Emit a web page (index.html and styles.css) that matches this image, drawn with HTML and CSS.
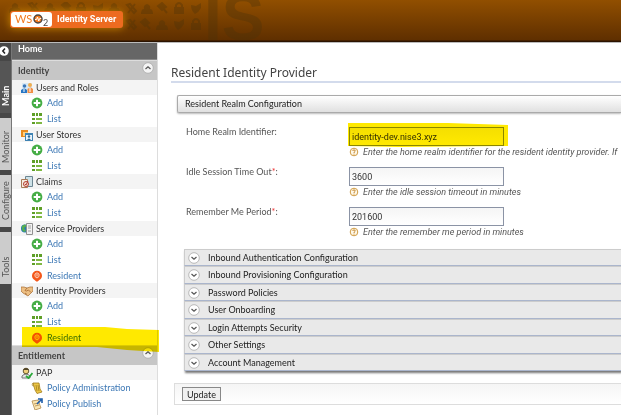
FILE: index.html
```html
<!DOCTYPE html>
<html lang="en">
<head>
<meta charset="utf-8">
<title>WSO2 Identity Server</title>
<link rel="stylesheet" href="styles.css">
</head>
<body>
<svg class="defs" aria-hidden="true">
  <symbol id="add" viewBox="0 0 12 12"><circle cx="6" cy="6" r="5.400" fill="#45ad45"/><path d="M6 2.700v6.600M2.700 6h6.600" stroke="#fff" stroke-width="2"/></symbol>
  <symbol id="list" viewBox="0 0 12 12"><path d="M1 0h3v3H1zM5 0h2v3H5zM8 0h3v3H8zM1 5h3v2H1zM1 9h3v2H1z" fill="#5f9f28"/><path d="M5 5h6v2H5zM5 9h6v2H5z" fill="#7fb843"/></symbol>
  <symbol id="resident" viewBox="0 0 12 12"><path d="M6 .7a5 5 0 0 1 5 5C11 8.600 8.500 9.800 6 11.800 3.500 9.800 1 8.600 1 5.700a5 5 0 0 1 5-5z" fill="#f4581b"/><path d="M6 2.800 8 4v2.500L6 8 4 6.500V4z" fill="none" stroke="#ffd3bd"/><path d="M6 4v2.500" stroke="#ffd3bd"/></symbol>
  <symbol id="users" viewBox="0 0 12 12"><path d="M1 1h10v9H1z" fill="#d7e8f5"/><circle cx="3.500" cy="4" r="1.800" fill="#3a76b8"/><circle cx="9" cy="3" r="2" fill="#f0ad4c"/><path d="M0 11V8q3.500-3 6 0v3z" fill="#2876c4"/><path d="M6.500 11V7q3-3 5.500 0v4z" fill="#f08e45"/><path d="M3 7v3M9 6v4" stroke="#fff"/></symbol>
  <symbol id="stores" viewBox="0 0 12 12"><path d="M0 1h7v7H0z" fill="#e88a1c"/><path d="M2 3h5v4H2z" fill="#ffd080"/><path d="M4 4h8v8H4z" fill="#3f83b3"/><path d="M5 6h6v5H5z" fill="#e7f2fa"/><circle cx="8" cy="7.500" r="1.200" fill="#326c98"/><path d="M6 11q2-3 4 0z" fill="#326c98"/></symbol>
  <symbol id="claims" viewBox="0 0 12 12"><path d="M4.500.5h7v10h-7z" fill="#cde1e7" stroke="#6c8692"/><path d="M.5 3.500h6v8h-6z" fill="#f7eee1" stroke="#a77b57"/><circle cx="5" cy="8" r="2.500" fill="#f5ded0" stroke="#b33d31"/><path d="m4 8 1 1 2-4" fill="none" stroke="#b33d31"/></symbol>
  <symbol id="service" viewBox="0 0 12 12"><circle cx="4" cy="5.500" r="4" fill="#2277b7"/><path d="M1 3q3-3 5 0L3 5l2 3-2 1Q0 7 1 3z" fill="#56ad50"/><path d="M5.500.5h6v11h-6z" fill="#f2f2f2" stroke="#909090"/><path d="M7 3h3M7 5h3M7 8h3" stroke="#a0a0a0"/></symbol>
  <symbol id="shake" viewBox="0 0 12 12"><path d="M0 2h3l3 1 3-1h3v4L7 11 2 8 0 6z" fill="#edbf83" stroke="#a66c31" stroke-width=".7"/><path d="M6 3 4 5.500l1.500.5L7.500 5 10 7.500M4 8l2 1.500" fill="none" stroke="#a3662e" stroke-width=".8"/></symbol>
  <symbol id="pap" viewBox="0 0 12 12"><path d="M1 11V9q4-4 8 0v2z" fill="#e5e5e5" stroke="#777"/><circle cx="5" cy="4" r="2.800" fill="#f0cf79" stroke="#665630"/><path d="M2 3q3-4 6 0z" fill="#514528"/><path d="m5 9 2.500 2L11.500 6" fill="none" stroke="#28a938" stroke-width="1.800"/></symbol>
  <symbol id="policy" viewBox="0 0 12 12"><path d="M2 1h6l1 6 2 3-5 1.500L4 8z" fill="#ecc747" stroke="#a37c19" stroke-width=".8"/><path d="M2 1q-2 3 1 3M5 3l1 6M7 3l1 6" fill="none" stroke="#a37c19" stroke-width=".8"/></symbol>
  <symbol id="publish" viewBox="0 0 12 12"><path d="m1 3 6-1 3 8-6 2z" fill="#fae5b2" stroke="#b38a4b" stroke-width=".8"/><path d="m3 6 4-1M4 8l4-1" stroke="#b38a4b" stroke-width=".8"/><path d="m6 6 4-4M7 1h4v4" fill="none" stroke="#1d5ca9" stroke-width="1.600"/></symbol>
  <symbol id="down" viewBox="0 0 12 12"><circle cx="6" cy="6" r="5.300" fill="#fff" stroke="#aaa" stroke-width=".8"/><path d="m3.500 5 2.500 2.300L8.500 5" fill="none" stroke="#555" stroke-width="1.200"/></symbol>
  <symbol id="up" viewBox="0 0 12 12"><circle cx="6" cy="6" r="5.300" fill="#f4f4f4" stroke="#aaa" stroke-width=".8"/><path d="M3.500 7 6 4.700 8.500 7" fill="none" stroke="#555" stroke-width="1.200"/></symbol>
  <symbol id="help" viewBox="0 0 10 10"><circle cx="5" cy="5" r="3.800" fill="#fff8e7" stroke="#cf9b43"/><path d="M3.700 4Q4 2.800 5 2.900q1.500.2 1.200 1.300Q5 4.800 5 6M5 6.600v1" fill="none" stroke="#c4862d"/></symbol>
</svg>
<header class="header">
  <svg class="pattern" viewBox="0 0 210 30" aria-hidden="true">
    <defs>
      <g id="tools"><path d="m1 2 3-1 6 7-2 2zM9 1 2 10" stroke="#4b3209" stroke-width="2" fill="none"/></g>
      <g id="people"><path d="M0 11q0-5 3-5-1-4 3-5 4 1 3 5 3 0 3 5z" fill="#4b3209"/></g>
      <g id="gavel"><path d="m2 3 4-3 4 4-4 3zM6 4l5 6" fill="#4b3209" stroke="#4b3209" stroke-width="2"/></g>
      <g id="lock"><path d="M1 5h10v7H1z" fill="#4b3209"/><path d="M3 6V3q3-4 6 0v3" fill="none" stroke="#4b3209" stroke-width="2"/></g>
      <g id="shield"><path d="m1 3 5 1 5-3v5q-2 4-6 6Q1 9 1 3z" fill="#4b3209"/></g>
    </defs>
    <use href="#people" x="9" y="0"/><use href="#tools" x="28" y="0"/><use href="#people" x="44" y="0"/><use href="#gavel" x="60" y="0"/><use href="#lock" x="75" y="0"/><use href="#shield" x="92" y="0"/><use href="#people" x="108" y="0"/>
    <use href="#tools" x="126" y="1"/><use href="#people" x="141" y="1"/><use href="#gavel" x="156" y="1"/><use href="#lock" x="173" y="0"/><use href="#shield" x="190" y="0"/>
    <use href="#tools" x="126" y="17"/><use href="#gavel" x="139" y="17"/><use href="#people" x="156" y="17"/><use href="#shield" x="173" y="16"/><use href="#lock" x="190" y="16"/>
  </svg>
  <span class="watermark" aria-hidden="true">IS</span>
  <a class="brand" href="#">
    <svg class="logo" viewBox="0 0 41 15" role="img" aria-label="WSO2">
      <text x="4" y="11" class="logo-text">WS</text>
      <circle cx="27" cy="7" r="4" fill="#f47b20" stroke="#4b4540" stroke-width="1.500"/>
      <path d="M24 7.500h1.500l1-2.500 1.200 4 1-2.500h1.500" fill="none" stroke="#fff"/>
      <text x="32" y="14" class="logo-two">2</text>
    </svg>
    <span>Identity Server</span>
  </a>
</header>
<div class="layout">
  <nav class="tabs" aria-label="Sections">
    <button class="collapse" aria-label="Collapse menu"><svg viewBox="0 0 10 10"><circle cx="4" cy="5" r="4.800" fill="#fff"/><path d="M5 2.500 2.800 5 5 7.500" fill="none" stroke="#222" stroke-width="1.500"/></svg></button>
    <a class="tab active" href="#">Main</a>
    <a class="tab" href="#">Monitor</a>
    <a class="tab" href="#">Configure</a>
    <a class="tab" href="#">Tools</a>
  </nav>
  <nav class="menu" aria-label="Main menu">
    <a class="home" href="#">Home</a>
    <h2>Identity <button aria-label="Collapse Identity"><svg><use href="#up"/></svg></button></h2>
    <h3><svg><use href="#users"/></svg>Users and Roles</h3>
    <ul><li><a href="#"><svg><use href="#add"/></svg>Add</a></li><li><a href="#"><svg><use href="#list"/></svg>List</a></li></ul>
    <h3><svg><use href="#stores"/></svg>User Stores</h3>
    <ul><li><a href="#"><svg><use href="#add"/></svg>Add</a></li><li><a href="#"><svg><use href="#list"/></svg>List</a></li></ul>
    <h3><svg><use href="#claims"/></svg>Claims</h3>
    <ul><li><a href="#"><svg><use href="#add"/></svg>Add</a></li><li><a href="#"><svg><use href="#list"/></svg>List</a></li></ul>
    <h3><svg><use href="#service"/></svg>Service Providers</h3>
    <ul><li><a href="#"><svg><use href="#add"/></svg>Add</a></li><li><a href="#"><svg><use href="#list"/></svg>List</a></li><li><a href="#"><svg><use href="#resident"/></svg>Resident</a></li></ul>
    <h3><svg><use href="#shake"/></svg>Identity Providers</h3>
    <ul><li><a href="#"><svg><use href="#add"/></svg>Add</a></li><li><a href="#"><svg><use href="#list"/></svg>List</a></li><li class="marked"><a href="#"><svg><use href="#resident"/></svg>Resident</a><svg class="marker menu-marker" viewBox="0 0 137 25" preserveAspectRatio="none" aria-hidden="true"><path d="M0 0 83 0 105 2 137 3V25L105 23 75 20 0 20z"/></svg></li></ul>
    <h2>Entitlement <button aria-label="Collapse Entitlement"><svg><use href="#up"/></svg></button></h2>
    <h3><svg><use href="#pap"/></svg>PAP</h3>
    <ul><li><a href="#"><svg><use href="#policy"/></svg>Policy Administration</a></li><li><a href="#"><svg><use href="#publish"/></svg>Policy Publish</a></li></ul>
  </nav>
  <main class="content">
    <h1>Resident Identity Provider</h1>
    <form class="config">
      <h2 class="section-title">Resident Realm Configuration</h2>
      <div class="fields">
        <div class="field">
          <label for="realm">Home Realm Identifier:</label>
          <div class="control marked"><input id="realm" type="text" value="identity-dev.nise3.xyz"><svg class="marker field-marker" viewBox="0 0 160 24" preserveAspectRatio="none" aria-hidden="true"><path d="M0 0 100 0 160 2V23L50 24 0 23z"/></svg>
          <p><svg><use href="#help"/></svg>Enter the home realm identifier for the resident identity provider. If</p></div>
        </div>
        <div class="field">
          <label for="idle">Idle Session Time Out<em>*</em>:</label>
          <div class="control"><input id="idle" type="text" value="3600"><p><svg><use href="#help"/></svg>Enter the idle session timeout in minutes</p></div>
        </div>
        <div class="field">
          <label for="remember">Remember Me Period<em>*</em>:</label>
          <div class="control"><input id="remember" type="text" value="201600"><p><svg><use href="#help"/></svg>Enter the remember me period in minutes</p></div>
        </div>
      </div>
      <div class="accordion">
        <button type="button"><svg><use href="#down"/></svg>Inbound Authentication Configuration</button>
        <button type="button"><svg><use href="#down"/></svg>Inbound Provisioning Configuration</button>
        <button type="button"><svg><use href="#down"/></svg>Password Policies</button>
        <button type="button"><svg><use href="#down"/></svg>User Onboarding</button>
        <button type="button"><svg><use href="#down"/></svg>Login Attempts Security</button>
        <button type="button"><svg><use href="#down"/></svg>Other Settings</button>
        <button type="button"><svg><use href="#down"/></svg>Account Management</button>
      </div>
      <div class="actions"><button type="submit">Update</button></div>
    </form>
  </main>
</div>
</body>
</html>
```

FILE: styles.css
```css
* { box-sizing: border-box; }
html, body { height: 100%; }
body {
  margin: 0;
  display: flex;
  flex-direction: column;
  overflow: hidden;
  background: #fff;
  color: #333;
  font: 9px/12px Lato, sans-serif;
}
h1, h2, h3, p, ul { margin: 0; padding: 0; font-weight: 400; }
ul { list-style: none; }
a { text-decoration: none; }
button { font: inherit; padding: 0; border: 0; background: none; color: inherit; }
svg { display: block; flex: none; width: 12px; height: 12px; }
.defs { position: absolute; width: 0; height: 0; }

.header {
  position: relative;
  flex: none;
  height: 43px;
  padding: 11px 10px;
  overflow: hidden;
  border-bottom: 1px solid #bbb;
  background: linear-gradient(#914f00, #5f2f00 40px, #2b1300 41px);
}
.pattern { position: absolute; left: 0; top: 2px; width: 210px; height: 30px; opacity: .35; }
.watermark {
  position: absolute;
  left: 204px;
  top: -5px;
  color: #4b3209;
  opacity: .35;
  font: 900 64px/46px "Liberation Sans", sans-serif;
}
.brand {
  position: relative;
  display: inline-flex;
  align-items: center;
  gap: 5px;
  height: 17px;
  padding: 0 7px 0 1px;
  border-radius: 3px;
  background: #ed6b20;
  box-shadow: 0 0 8px #c98500;
  color: #fff;
  font: 700 9px/15px Roboto, sans-serif;
}
.logo { width: 41px; height: 15px; border-radius: 3px; background: #fff; }
.logo-text { font: 11px Lato, sans-serif; fill: #f47b20; }
.logo-two { font: 9px Lato, sans-serif; fill: #4b4540; }

.layout { flex: 1; display: flex; min-height: 0; }
.tabs {
  flex: none;
  display: flex;
  flex-direction: column;
  gap: 5px;
  width: 12px;
  background: #474747;
  border-right: 1px solid #777;
}
.collapse { height: 13px; padding-top: 2px; }
.collapse svg { width: 10px; height: 10px; }
.tab {
  display: flex;
  justify-content: flex-start;
  align-items: center;
  height: 52px;
  padding-top: 7px;
  writing-mode: vertical-rl;
  transform: rotate(180deg);
  background: #ccc;
  color: #555;
  line-height: 11px;
}
.tab.active { background: #555; color: #fff; font-weight: 700; }

.menu { flex: none; width: 146px; border-right: 1px solid #ddd; background: #fff; }
.home {
  display: block;
  height: 17px;
  padding-left: 6px;
  border-bottom: 1px solid #888;
  background: #666;
  color: #fff;
  font-weight: 700;
}
.menu h2 {
  display: flex;
  align-items: center;
  justify-content: space-between;
  height: 20px;
  padding: 0 3px 0 6px;
  border-top: 1px solid #ddd;
  background: #c6c6c6;
  color: #444;
  font-size: 9px;
  font-weight: 700;
}
.menu h2 button { align-self: flex-start; padding-top: 1px; }
.menu h3 {
  display: flex;
  align-items: center;
  gap: 3px;
  height: 15px;
  padding-left: 9px;
  background: #f4f4f4;
  color: #333;
  font-size: 9px;
}
.menu li a {
  display: flex;
  align-items: center;
  gap: 4px;
  height: 16px;
  padding-left: 19px;
  color: #3d78b5;
}
.menu li:nth-child(3) a { height: 15px; }
.marked { position: relative; }
.marker { position: absolute; z-index: 1; mix-blend-mode: multiply; pointer-events: none; fill: #ffe900; }
.menu-marker { left: 10px; top: -3px; width: 137px; height: 25px; }
.field-marker { left: -1px; top: -4px; width: 160px; height: 24px; }

.content { flex: 1; min-width: 0; padding: 22px 0 0 13px; }
h1 {
  border-bottom: 2px solid #d3dbec;
  color: #444;
  font: 12px/16px "Noto Sans", sans-serif;
}
.config { padding-left: 3px; }
.section-title {
  height: 18px;
  margin: 12px 0 0 3px;
  padding-left: 7px;
  border: 1px solid #aaa;
  border-right: 0;
  border-radius: 2px 0 0 2px;
  background: linear-gradient(#fff, #e0e0e0);
  box-shadow: 0 1px 2px #bbb;
  color: #222;
  font-size: 9px;
  line-height: 16px;
}
.fields { padding: 14px 0 0 12px; overflow: hidden; }
.field { display: grid; grid-template-columns: 163px 1fr; height: 40px; color: #555; }
.field label { line-height: 10px; }
.field em { color: #e33; font-style: normal; }
.control { min-width: 0; }
.field input {
  display: block;
  width: 155px;
  height: 19px;
  padding: 0 2px;
  border: 1px solid #8b93a5;
  background: linear-gradient(#f5f5f5, #fff);
  color: #333;
  font: 9px/12px Roboto, sans-serif;
}
.field p {
  display: flex;
  align-items: center;
  gap: 4px;
  color: #555;
  font: italic 9px/12px Roboto, sans-serif;
  white-space: nowrap;
}
.field p svg { width: 10px; height: 10px; }
.accordion { margin: 2px 0 0 10px; box-shadow: 1px 2px 2px #777; }
.accordion button {
  display: flex;
  align-items: center;
  gap: 8px;
  width: 100%;
  height: 17px;
  padding-left: 3px;
  border: 1px solid #ccc;
  border-bottom-color: #aab5cc;
  border-right: 0;
  background: #e9e9e9;
  color: #222;
}
.accordion button:nth-child(even) { height: 18px; }
.actions {
  height: 22px;
  margin-top: 12px;
  padding: 3px 7px;
  border: 1px solid #ddd;
  border-right: 0;
  background: linear-gradient(#f5f5f5, #fff);
}
.actions button { width: 39px; height: 14px; border: 1px solid #888; background: #f0f0f0; color: #222; line-height: 11px; }
```
